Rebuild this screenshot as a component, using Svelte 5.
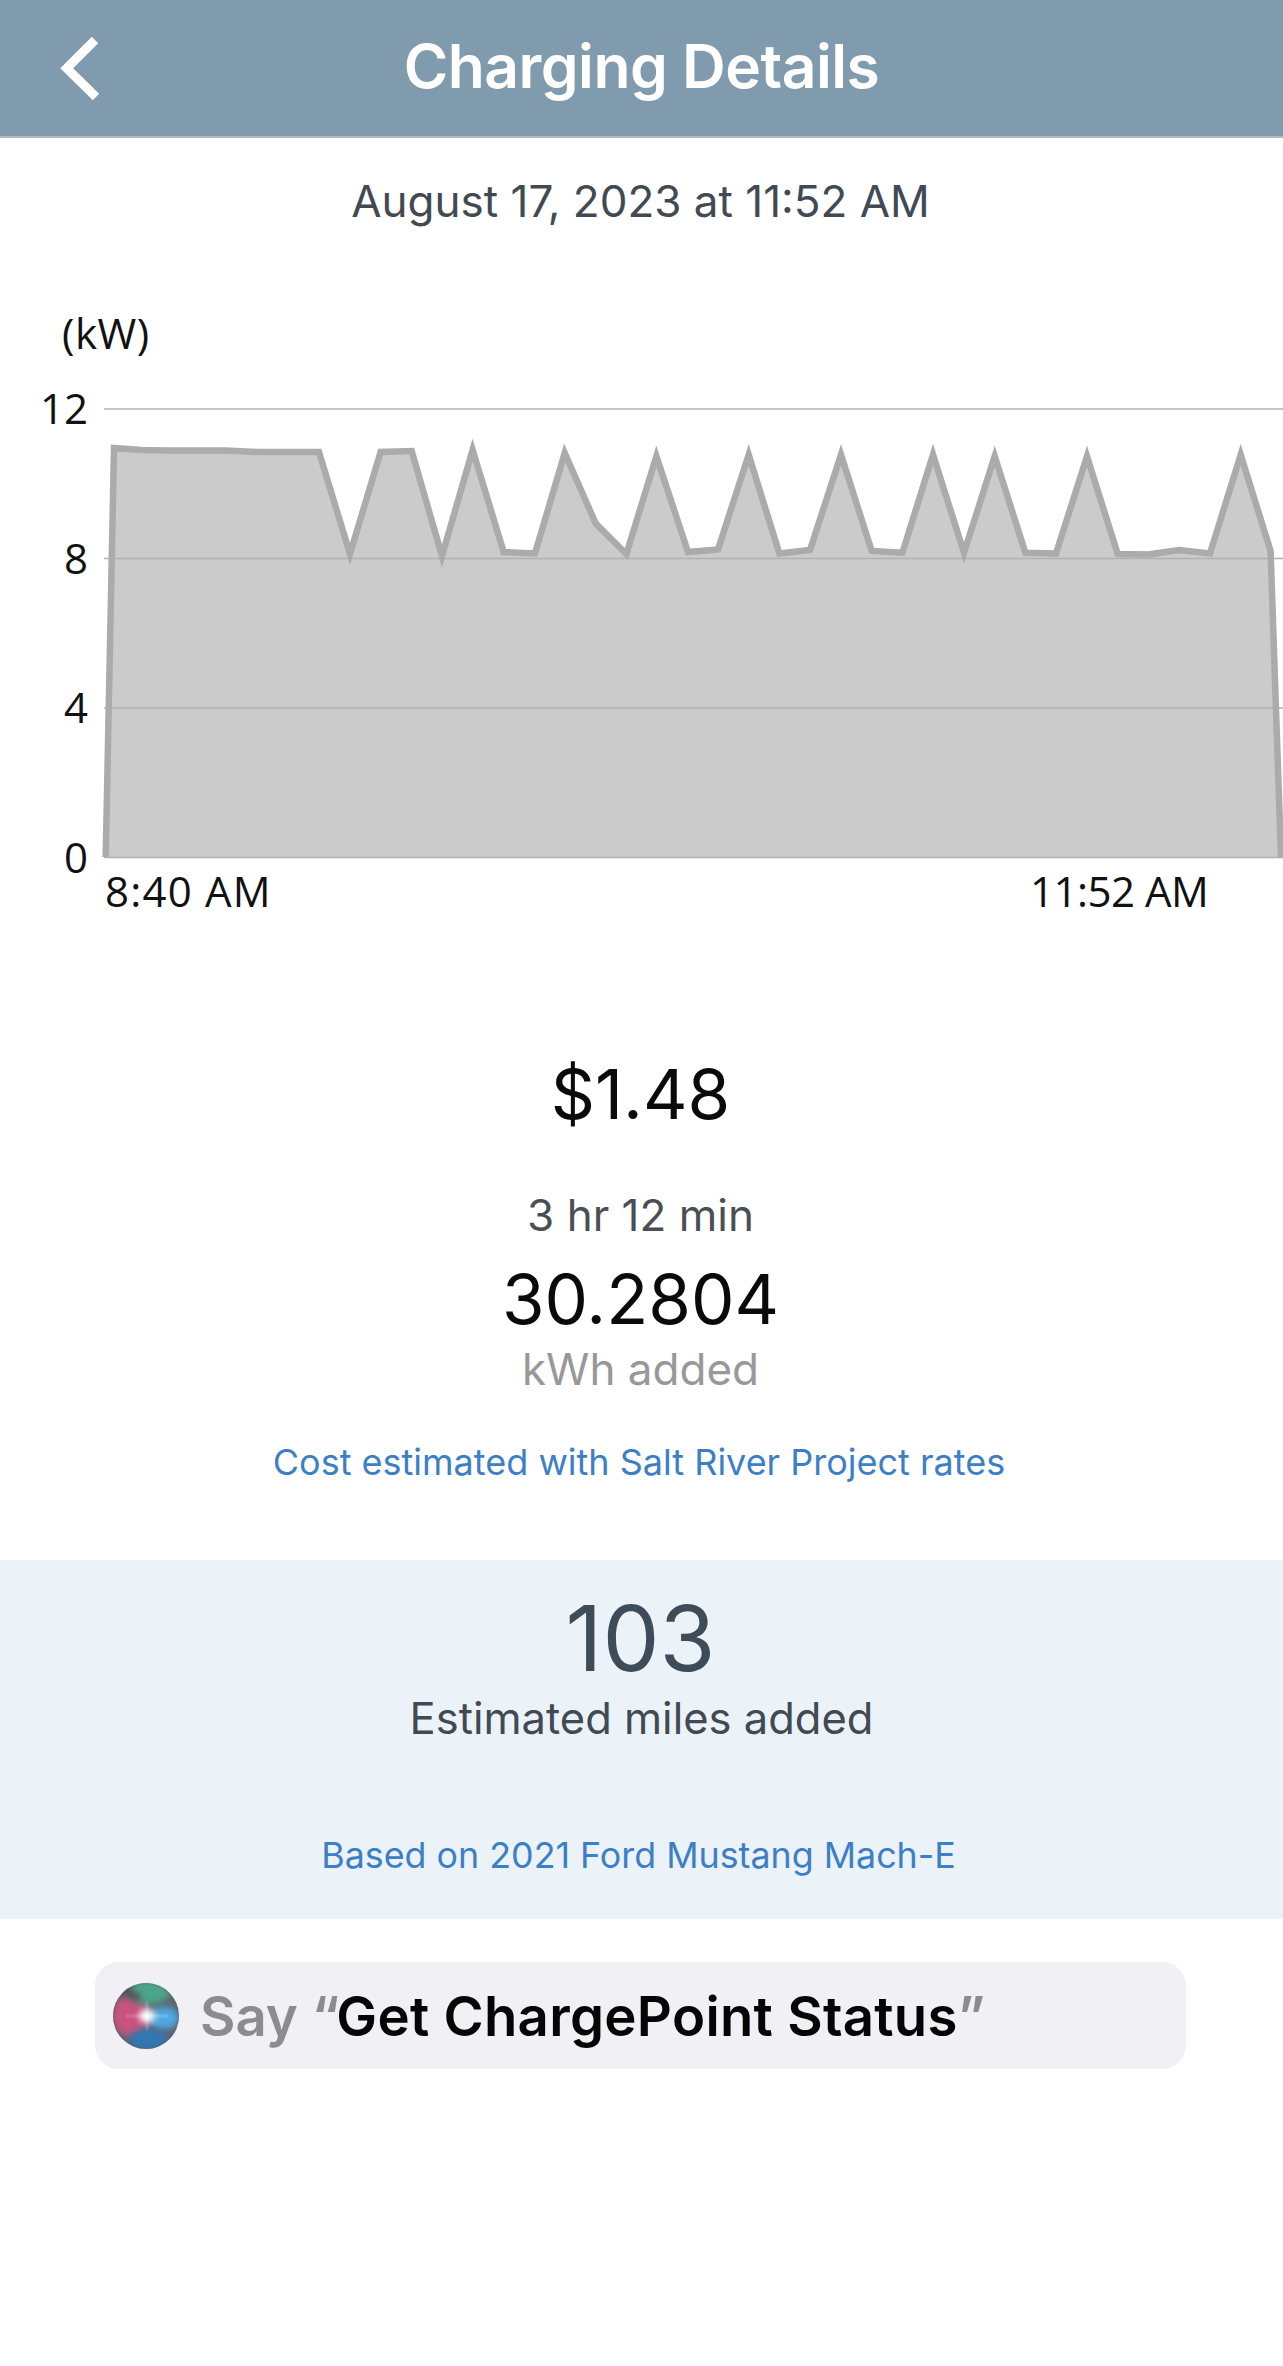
<script>
  const pts = [[105.7,857],[114,448],[141,450],[166,450.5],[226,450.5],[257,452],[319,452],[350,554],[380.6,452],[411.7,451],[442,556],[472.6,450],[503.7,552],[535,553.5],[564.7,453],[595.8,523.6],[626.4,554],[656.4,456.3],[688,552],[718,549.4],[748.7,454.7],[779.4,553.5],[810,550],[841,454.7],[871.7,551],[902.4,552.7],[933,454.7],[964,552.7],[994.7,456.3],[1025.4,552.7],[1056,553.5],[1087,456.3],[1117.7,554],[1148.4,554.5],[1179,550],[1210,553.5],[1240.7,454.7],[1270.6,551],[1281,857]];
  const top = 290;
  const line = pts.map(([x, y]) => `${x},${y - top}`).join(' ');
  const gridY = [409, 558.5, 708, 857.5].map((y) => y - top);
  const yLabels = [['12', 409], ['8', 558.5], ['4', 708], ['0', 857.5]];
</script>

<div class="page">
  <header class="nav">
    <svg class="back" viewBox="0 0 52 66" aria-hidden="true"><path d="M43 5 L14.7 33.3 L44 62" /></svg>
    <h1>Charging Details</h1>
  </header>

  <p class="date">August 17, 2023 at 11:52 AM</p>

  <svg class="chart" viewBox="0 0 1283 640" role="img" aria-label="Charging power chart">
    <text class="axis unit" x="62" y="59">(kW)</text>
    <polygon class="area" points={line} />
    {#each gridY as y}
      <line class="grid" x1="104" x2="1283" y1={y} y2={y} />
    {/each}
    <polyline class="stroke" points={line} />
    {#each yLabels as [t, y]}
      <text class="axis" x="88" y={y - top + 15} text-anchor="end">{t}</text>
    {/each}
    <text class="axis wide" x="105" y="617">8:40 AM</text>
    <text class="axis tight" x="1030" y="617">11:52 AM</text>
  </svg>

  <section class="stats">
    <div class="cost">$1.48</div>
    <div class="duration">3 hr 12 min</div>
    <div class="kwh">30.2804</div>
    <div class="kwh-label">kWh added</div>
    <div class="link rates">Cost estimated with Salt River Project rates</div>
  </section>

  <section class="miles">
    <div class="miles-value">103</div>
    <div class="miles-label">Estimated miles added</div>
    <div class="link car">Based on 2021 Ford Mustang Mach-E</div>
  </section>

  <div class="siri">
    <span class="orb" aria-hidden="true">
      <i class="b1"></i><i class="b2"></i><i class="b3"></i><i class="b4"></i><i class="shade"></i><i class="glow"></i><i class="rays"></i>
      <i class="edge"></i>
    </span>
    <span class="say">Say “<b>Get ChargePoint Status</b>”</span>
  </div>
</div>

<style>
  :global(body) { margin: 0; background: #fff; }
  .page {
    width: 1283px;
    height: 2366px;
    overflow: hidden;
    background: #fff;
    font-family: Inter, "Liberation Sans", sans-serif;
    text-align: center;
  }
  .nav {
    position: relative;
    height: 136px;
    background: #819bae;
    border-bottom: 2px solid #b4b6c0;
    display: flex;
    align-items: center;
    justify-content: center;
  }
  .back {
    position: absolute;
    left: 52px;
    top: 35px;
    width: 52px;
    height: 66px;
    fill: none;
    stroke: #fff;
    stroke-width: 9;
  }
  h1 {
    margin: 0 0 5px;
    font-size: 60.5px;
    font-weight: 600;
    color: #fff;
    line-height: 70px;
    letter-spacing: -0.5px;
  }
  .date {
    margin: 0;
    padding: 38px 2px 0 0;
    font-size: 44px;
    line-height: 50px;
    color: #414a52;
  }
  .chart {
    display: block;
    width: 1283px;
    height: 640px;
    margin-top: 64px;
  }
  .axis {
    font-family: "Open Sans", sans-serif;
    font-size: 42px;
    fill: #111;
  }
  .wide { letter-spacing: 1.2px; }
  .tight { letter-spacing: -0.5px; }
  .unit { letter-spacing: 0.5px; }
  .area { fill: #cbcbcb; }
  .grid { stroke: #b1b1b1; stroke-width: 1.6; }
  .stroke {
    fill: none;
    stroke: #ababab;
    stroke-width: 6.5;
    stroke-linejoin: miter;
    stroke-miterlimit: 8;
  }
  .stats { padding-top: 120px; }
  .cost { font-size: 69px; line-height: 88px; color: #0a0a0a; padding-right: 2px; }
  .duration { font-size: 44px; line-height: 54px; color: #4a4f55; margin-top: 50px; padding-right: 2px; }
  .kwh { font-size: 69px; line-height: 84px; color: #0a0a0a; margin-top: 15px; padding-right: 2px; }
  .kwh-label { font-size: 44px; line-height: 54px; color: #98989b; margin-top: 1px; padding-right: 2px; }
  .link { font-size: 36px; line-height: 44px; color: #3d7fc7; }
  .rates { margin-top: 44px; padding-right: 5px; }
  .miles {
    margin-top: 76px;
    height: 359px;
    background: #ebf3f9;
    overflow: hidden;
  }
  .miles-value { font-size: 90.5px; line-height: 100px; color: #3e4b59; margin-top: 28px; padding-right: 2px; }
  .miles-label { font-size: 43.5px; line-height: 54px; color: #414a52; margin-top: 3px; }
  .car { margin-top: 88px; font-size: 35.8px; padding-right: 6px; }
  .siri {
    margin: 43px 0 0 95px;
    width: 1091px;
    height: 107px;
    box-sizing: border-box;
    padding-left: 18px;
    display: flex;
    align-items: center;
    gap: 21px;
    background: #f0f0f5;
    border-radius: 24px;
    text-align: left;
  }
  .say { font-size: 54.5px; font-weight: 600; color: #8b8b90; line-height: 66px; }
  .say b { font-weight: 600; color: #050505; letter-spacing: 0.3px; margin-left: -3px; }
  .orb {
    position: relative;
    flex: none;
    width: 66px;
    height: 66px;
    border-radius: 50%;
    overflow: hidden;
    background: #5c6672;
  }
  .orb i { position: absolute; border-radius: 50%; filter: blur(3px); }
  .b1 { left: -1px; top: 13px; width: 36px; height: 40px; background: #c9527f; }
  .b2 { left: 15px; top: -3px; width: 42px; height: 24px; background: #4ca588; }
  .b3 { left: 36px; top: 24px; width: 30px; height: 22px; background: #4fa8e2; }
  .b4 { left: 16px; top: 46px; width: 38px; height: 20px; background: #2f78b4; }
  .orb .shade { left: 4px; top: 6px; width: 26px; height: 9px; background: #5b4a58; transform: rotate(32deg); }
  .glow { left: 26px; top: 26px; width: 16px; height: 14px; background: #fff; filter: blur(2.5px); }
  .orb .rays {
    left: 13px;
    top: 19px;
    width: 42px;
    height: 28px;
    filter: blur(1px);
    border-radius: 0;
    background:
      linear-gradient(transparent 47%, rgba(255, 255, 255, 0.7) 50%, transparent 53%),
      linear-gradient(90deg, transparent 47%, rgba(255, 255, 255, 0.5) 50%, transparent 53%);
  }
  .orb .edge {
    inset: 0;
    filter: none;
    background: radial-gradient(circle, transparent 64%, rgba(40, 50, 70, 0.5) 100%);
  }
</style>
